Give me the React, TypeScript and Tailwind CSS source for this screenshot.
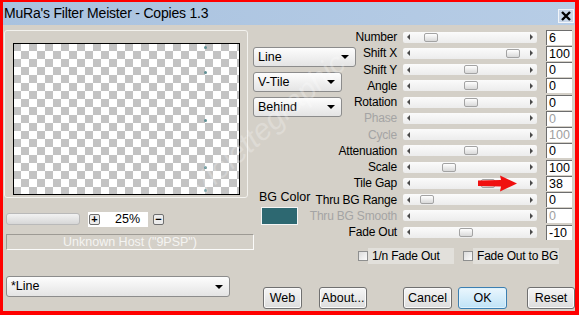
import React from 'react';

const FONT = { fontFamily: '"Liberation Sans", Arial, sans-serif' };

type Row = {
  label: string;
  value: string;
  thumb?: number; // left offset of the thumb inside the slider
  disabled?: boolean;
};

const rows: Row[] = [
  { label: 'Number', value: '6', thumb: 21 },
  { label: 'Shift X', value: '100', thumb: 103 },
  { label: 'Shift Y', value: '0', thumb: 61 },
  { label: 'Angle', value: '0', thumb: 61 },
  { label: 'Rotation', value: '0', thumb: 61 },
  { label: 'Phase', value: '0', disabled: true },
  { label: 'Cycle', value: '100', disabled: true },
  { label: 'Attenuation', value: '0', thumb: 61 },
  { label: 'Scale', value: '100', thumb: 39 },
  { label: 'Tile Gap', value: '38', thumb: 78 },
  { label: 'Thru BG Range', value: '0', thumb: 17 },
  { label: 'Thru BG Smooth', value: '0', disabled: true },
  { label: 'Fade Out', value: '-10', thumb: 56 },
];

const Slider = ({ thumb, arrow }: { thumb?: number; arrow?: boolean }) => (
  <div className="relative w-[134px] h-[11px] flex items-center justify-between px-[4px] rounded-[2px] bg-gradient-to-b from-[#fbfbfb] to-[#ececec]">
    <span className="w-0 h-0 border-y-[3px] border-y-transparent border-r-[3px] border-r-[#4a4a4a]" />
    <span className="w-0 h-0 border-y-[3px] border-y-transparent border-l-[3px] border-l-[#4a4a4a]" />
    {thumb !== undefined && (
      <span
        className="absolute top-[1px] w-[14px] h-[9px] rounded-[2px] border border-[#a3a3a3] bg-gradient-to-b from-[#ffffff] to-[#d9d9d9]"
        style={{ left: thumb }}
      />
    )}
    {arrow && (
      <svg className="absolute left-[75px] top-[-3px]" width="40" height="17" viewBox="0 0 40 17">
        <path d="M0 5.5 L23 5 L22 0.5 L39 8.5 L22 16.5 L23 11.5 L0 11 Z" fill="#f01010" />
      </svg>
    )}
  </div>
);

const Dropdown = ({ text, className }: { text: string; className: string }) => (
  <div
    className={`flex items-center justify-between pl-[4px] pr-[6px] rounded-[3px] border border-[#8c8c8c] bg-gradient-to-b from-[#fdfdfd] to-[#e4e4e4] text-[12.5px] text-black ${className}`}
  >
    <span>{text}</span>
    <span className="w-0 h-0 border-x-[4px] border-x-transparent border-t-[4px] border-t-black" />
  </div>
);

const Button = ({ text, className, primary }: { text: string; className: string; primary?: boolean }) => (
  <div
    className={`h-[22px] flex items-center justify-center rounded-[3px] border text-[12.5px] text-black ${
      primary
        ? 'border-[#3c7fb1] bg-gradient-to-b from-[#eaf6fd] to-[#bfe3f7] shadow-[inset_0_0_0_1px_#dff2fc]'
        : 'border-[#707070] bg-gradient-to-b from-[#f6f6f6] to-[#dcdcdc] shadow-[inset_0_0_0_1px_#fafafa]'
    } ${className}`}
  >
    {text}
  </div>
);

const Checkbox = ({ label, className }: { label: string; className: string }) => (
  <div className="flex items-center h-[16px]">
    <span className="w-[10px] h-[10px] border border-[#8e8f8f] bg-gradient-to-br from-[#dcdcdc] to-[#fbfbfb]" />
    <span
      className={`h-[16px] flex items-center pl-[4px] bg-[#e2e0db] text-[12px] tracking-[-0.2px] text-black whitespace-nowrap ${className}`}
    >
      {label}
    </span>
  </div>
);

export default function App() {
  return (
    <div
      className="relative w-[579px] h-[315px] flex flex-col overflow-hidden border-[#ff0000] border-t-2 border-l-[3px] border-r-4 border-b-4 bg-[#d4d0c8]"
      style={FONT}
    >
      {/* title bar */}
      <div className="h-[23px] flex items-center justify-between bg-gradient-to-r from-[#a9c2df] to-[#b7cde6] pl-[1px] pr-[1px]">
        <span className="text-[14px] text-black tracking-[-0.2px]">MuRa's Filter Meister - Copies 1.3</span>
        <span className="w-[16px] h-[14px] mt-[4px] flex items-center justify-center border border-[#f2f5f9] bg-[#c8d6e8]">
          <svg width="10" height="10" viewBox="0 0 10 10">
            <path d="M1 1 L9 9 M9 1 L1 9" stroke="#000" strokeWidth="2.4" />
          </svg>
        </span>
      </div>

      <div className="flex flex-1">
        {/* left column */}
        <div className="w-[250px] flex flex-col">
          <div className="mt-[5px] ml-[1px] w-[244px] h-[168px] rounded-[3px] border border-[#f3f2ee] pt-[12px] pl-[8px]">
            <div className="relative w-[227px] h-[152px] border border-black bg-[conic-gradient(#ffffff_25%,#c3c3c3_0_50%,#ffffff_0_75%,#c3c3c3_0)] bg-[length:16px_16px] bg-[position:-1px_-1px]">
              <span className="absolute left-[190px] top-[2px] w-[3px] h-[3px] rounded-full bg-[#5f8f94]" />
              <span className="absolute left-[190px] top-[27px] w-[3px] h-[3px] rounded-full bg-[#5f8f94]" />
              <span className="absolute left-[190px] top-[75px] w-[3px] h-[3px] rounded-full bg-[#5f8f94]" />
              <span className="absolute left-[190px] top-[122px] w-[3px] h-[3px] rounded-full bg-[#5f8f94]" />
              <span className="absolute left-[190px] top-[145px] w-[3px] h-[3px] rounded-full bg-[#5f8f94]" />
            </div>
          </div>

          <div className="mt-[14px] flex items-center h-[14px]">
            <div className="ml-[3px] w-[74px] h-[12px] rounded-[3px] border border-[#b9b9b9] bg-gradient-to-b from-[#f2f2f2] to-[#d7d7d7]" />
            <div className="ml-[8px] w-[60px] h-[15px] bg-white flex items-center">
              <span className="ml-[1px] w-[11px] h-[11px] rounded-[2px] border border-[#6f6f6f] bg-[#ececec] flex items-center justify-center text-[11px] leading-none font-bold">+</span>
              <span className="ml-[15px] text-[12.5px]">25%</span>
            </div>
            <span className="ml-[5px] w-[11px] h-[11px] rounded-[2px] border border-[#6f6f6f] bg-[#ececec] flex items-center justify-center text-[11px] leading-none font-bold">−</span>
          </div>

          <div className="mt-[8px] ml-[3px] w-[248px] h-[16px] border-t border-l border-[#9d9a94] border-r border-b border-r-[#fbfbfa] border-b-[#fbfbfa] flex items-center justify-center text-[12.5px] text-[#f4f4f2]">
            Unknown Host ("9PSP")
          </div>

          <Dropdown text="*Line" className="mt-[26px] ml-[3px] w-[224px] h-[21px]" />
        </div>

        {/* middle + right */}
        <div className="flex-1 flex flex-col">
          <div className="flex">
            <div className="w-[52px] flex flex-col">
              <Dropdown text="Line" className="mt-[22px] w-[103px] h-[20px]" />
              <Dropdown text="V-Tile" className="mt-[5px] w-[89px] h-[20px]" />
              <Dropdown text="Behind" className="mt-[5px] w-[89px] h-[20px]" />
              <span className="mt-[72px] ml-[6px] text-[12.5px] whitespace-nowrap leading-[16px]">BG Color</span>
              <span className="mt-[2px] ml-[8px] w-[37px] h-[18px] border border-[#f4f4f4] bg-[#2d6871]" />
            </div>

            <div className="flex flex-col pt-[4px]">
              <div className="grid grid-cols-[92px_134px_29px] gap-x-[6px]">
                {rows.map((r) => (
                  <React.Fragment key={r.label}>
                    <span
                      className={`h-[16.25px] text-right text-[12px] tracking-[-0.2px] leading-[16px] whitespace-nowrap ${
                        r.disabled ? 'text-[#a4a4a4]' : 'text-black'
                      }`}
                    >
                      {r.label}
                    </span>
                    <div className="h-[16.25px] flex items-center">
                      <Slider thumb={r.thumb} arrow={r.label === 'Tile Gap'} />
                    </div>
                    <div className="h-[16.25px] flex items-center ml-[3px]">
                      <span
                        className={`w-[29px] h-[15px] bg-white border-t border-l border-[#6d6d6d] pl-[2px] text-[12.5px] leading-[14px] ${
                          r.disabled ? 'text-[#a0a0a0]' : 'text-black'
                        }`}
                      >
                        {r.value}
                      </span>
                    </div>
                  </React.Fragment>
                ))}
              </div>

              <div className="mt-[8px] flex items-center pl-[53px] gap-[9px]">
                <Checkbox label="1/n Fade Out" className="w-[86px]" />
                <Checkbox label="Fade Out to BG" className="w-[86px]" />
              </div>
            </div>
          </div>

          <div className="mt-[23px] flex items-center pl-[10px]">
            <Button text="Web" className="w-[39px]" />
            <Button text="About..." className="ml-[17px] w-[48px]" />
            <Button text="Cancel" className="ml-[36px] w-[49px]" />
            <Button text="OK" className="ml-[6px] w-[49px]" primary />
            <Button text="Reset" className="ml-[20px] w-[48px]" />
          </div>
        </div>
      </div>

      {/* faint watermark */}
      <span className="absolute left-[165px] top-[100px] -rotate-[42deg] text-[30px] italic text-white/25 pointer-events-none">
        Violettegraphic
      </span>
    </div>
  );
}
